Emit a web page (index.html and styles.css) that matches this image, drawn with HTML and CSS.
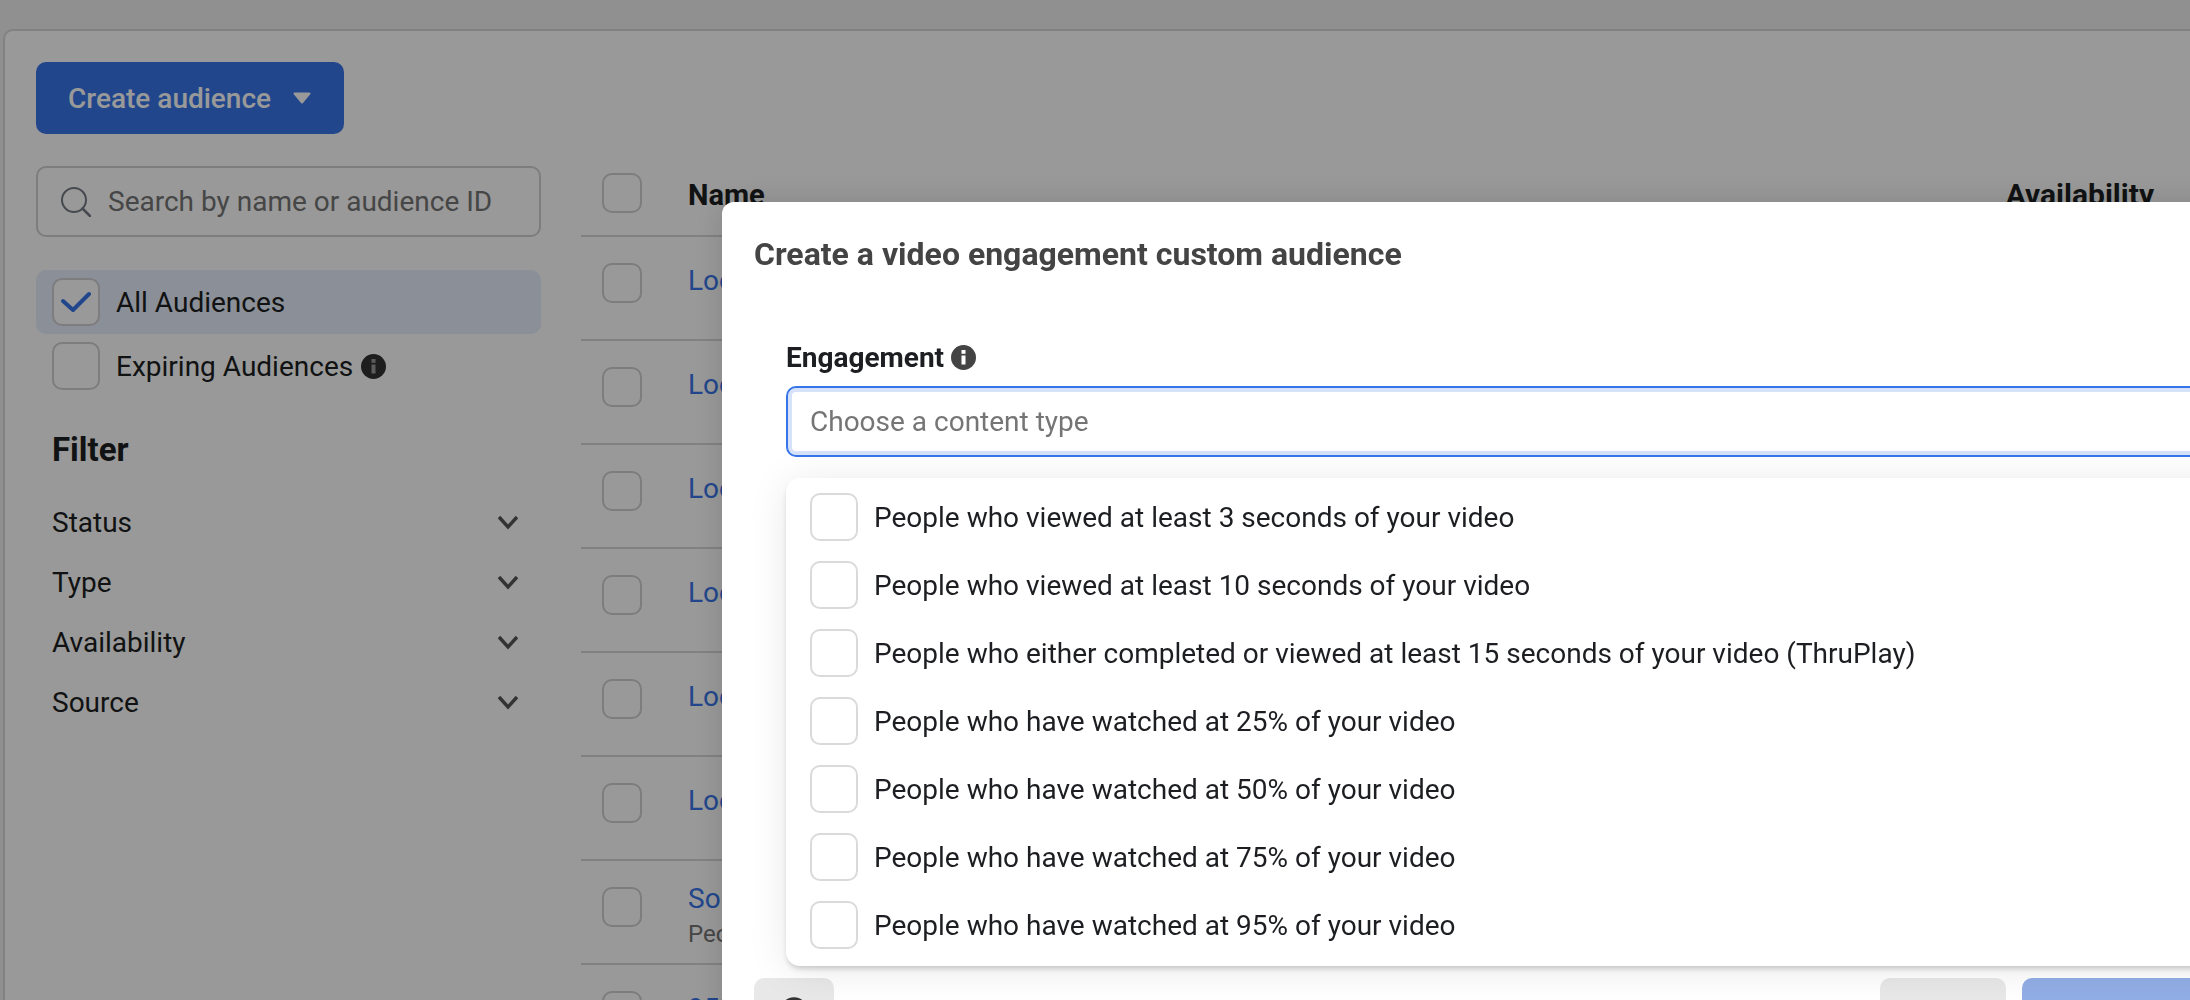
FILE: index.html
```html
<!DOCTYPE html>
<html lang="en">
<head>
<meta charset="utf-8">
<title>Audiences</title>
<link rel="stylesheet" href="styles.css">
</head>
<body>
<div class="page">
  <main class="card">
    <div class="toolbar">
      <button class="create-btn">Create audience
        <svg class="caret" width="18" height="12" viewBox="0 0 18 12"><path d="M1.5 1.5h15L9 10.5z" fill="currentColor" stroke="currentColor" stroke-linejoin="round" stroke-width="2"/></svg>
      </button>
    </div>
    <div class="content">
      <aside class="sidebar">
        <div class="search">
          <svg width="30" height="30" viewBox="0 0 30 30" fill="none" stroke="#757a85" stroke-width="2"><circle cx="13" cy="13" r="12"/><path d="M21.5 21.5L29 29" stroke-linecap="round" stroke-width="2.5"/></svg>
          <span>Search by name or audience ID</span>
        </div>
        <div class="scope scope-on">
          <span class="box box-side"><svg width="30" height="22" viewBox="0 0 30 22" fill="none"><path d="M2 10l10 9L28 3" stroke="#3775e9" stroke-width="4" stroke-linecap="round" stroke-linejoin="round"/></svg></span>
          <span>All Audiences</span>
        </div>
        <div class="scope">
          <span class="box box-side"></span>
          <span>Expiring Audiences</span>
          <svg class="info" width="25" height="25" viewBox="0 0 25 25"><circle cx="12.5" cy="12.5" r="12.5" fill="#333"/><rect x="10.5" y="10.5" width="4" height="9" fill="#999"/><rect x="10.5" y="5" width="4" height="3.8" fill="#999"/></svg>
        </div>
        <h2 class="filter-title">Filter</h2>
        <ul class="filters">
          <li>Status<svg width="22" height="16" viewBox="0 0 22 16" fill="none"><path d="M2 3l9 10 9-10" stroke="#555" stroke-width="3.4"/></svg></li>
          <li>Type<svg width="22" height="16" viewBox="0 0 22 16" fill="none"><path d="M2 3l9 10 9-10" stroke="#555" stroke-width="3.4"/></svg></li>
          <li>Availability<svg width="22" height="16" viewBox="0 0 22 16" fill="none"><path d="M2 3l9 10 9-10" stroke="#555" stroke-width="3.4"/></svg></li>
          <li>Source<svg width="22" height="16" viewBox="0 0 22 16" fill="none"><path d="M2 3l9 10 9-10" stroke="#555" stroke-width="3.4"/></svg></li>
        </ul>
      </aside>
      <section class="table">
        <div class="thead">
          <span class="box box-row"></span>
          <span class="th-name">Name</span>
          <span class="th-avail">Availability</span>
        </div>
        <div class="row"><span class="box box-row"></span><div class="cell"><a class="name">Lookalike (US, 1%)</a></div></div>
        <div class="row"><span class="box box-row"></span><div class="cell"><a class="name">Lookalike (US, 2%)</a></div></div>
        <div class="row"><span class="box box-row"></span><div class="cell"><a class="name">Lookalike (US, 3%)</a></div></div>
        <div class="row"><span class="box box-row"></span><div class="cell"><a class="name">Lookalike (US, 4%)</a></div></div>
        <div class="row"><span class="box box-row"></span><div class="cell"><a class="name">Lookalike (US, 5%)</a></div></div>
        <div class="row"><span class="box box-row"></span><div class="cell"><a class="name">Lookalike (US, 6%)</a></div></div>
        <div class="row"><span class="box box-row"></span><div class="cell cell-two"><a class="name">Source audience</a><span class="sub">People</span></div></div>
        <div class="row"><span class="box box-row"></span><div class="cell"><a class="name">95% video viewers</a></div></div>
      </section>
    </div>
  </main>
</div>
<div class="scrim"></div>
<div class="modal">
  <h1 class="modal-title">Create a video engagement custom audience</h1>
  <div class="modal-body">
    <div class="label">Engagement
      <svg width="25" height="25" viewBox="0 0 25 25"><circle cx="12.5" cy="12.5" r="12.5" fill="#444"/><rect x="10.5" y="10.5" width="4" height="9" fill="#fff"/><rect x="10.5" y="5" width="4" height="3.8" fill="#fff"/></svg>
    </div>
    <div class="select">Choose a content type</div>
    <ul class="menu">
      <li><span class="box box-menu"></span>People who viewed at least 3 seconds of your video</li>
      <li><span class="box box-menu"></span>People who viewed at least 10 seconds of your video</li>
      <li><span class="box box-menu"></span>People who either completed or viewed at least 15 seconds of your video (ThruPlay)</li>
      <li><span class="box box-menu"></span>People who have watched at 25% of your video</li>
      <li><span class="box box-menu"></span>People who have watched at 50% of your video</li>
      <li><span class="box box-menu"></span>People who have watched at 75% of your video</li>
      <li><span class="box box-menu"></span>People who have watched at 95% of your video</li>
    </ul>
  </div>
  <div class="modal-footer">
    <span class="btn btn-help"><svg width="28" height="28" viewBox="0 0 28 28" fill="none"><circle cx="14" cy="14" r="12" stroke="#333" stroke-width="3.5"/></svg></span>
    <span class="btn btn-cancel"></span>
    <span class="btn btn-next"></span>
  </div>
</div>
</body>
</html>
```
FILE: styles.css
```css
* { box-sizing: border-box; }
html, body { margin: 0; height: 1000px; overflow: hidden; }
body { font-family: Roboto, "Liberation Sans", sans-serif; color: #1c1e21; background: #f0f0f0; }
.page { padding: 29px 0 0 3px; height: 1000px; }
.card { background: #fff; border: 2px solid #d8d8d8; border-right: 0; border-bottom: 0; border-radius: 10px 0 0 0; height: 971px; padding: 31px 0 0 31px; overflow: hidden; }
.toolbar { height: 72px; }
.create-btn { display: flex; align-items: center; gap: 22px; width: 308px; height: 72px; padding: 0 0 0 32px; border: 0; border-radius: 10px; background: #3775e9; color: #fff; font: 500 28px Roboto, sans-serif; }
.content { display: flex; margin-top: 32px; }
.sidebar { width: 505px; flex: none; }
.search { display: flex; align-items: center; gap: 17px; height: 71px; padding: 0 0 0 23px; border: 2px solid #d0d0d0; border-radius: 10px; color: #757575; font-size: 28px; }
.scope { display: flex; align-items: center; height: 64px; padding-left: 16px; font-size: 28px; gap: 16px; }
.scope-on { margin-top: 33px; background: #e8eefd; border-radius: 10px; }
.box { display: inline-flex; align-items: center; justify-content: center; flex: none; background: #fff; border: 2px solid #d0d0d4; border-radius: 10px; }
.box-side { width: 48px; height: 48px; }
.info { margin-left: -8px; }
.filter-title { margin: 32px 0 0 16px; font-size: 33px; font-weight: 700; line-height: 40px; }
.filters { list-style: none; margin: 22px 0 0; padding: 0 22px 0 16px; font-size: 28px; }
.filters li { display: flex; justify-content: space-between; align-items: center; height: 60px; }
.table { flex: 1; margin-left: 40px; min-width: 0; }
.thead, .row { display: flex; align-items: flex-start; padding-left: 21px; border-bottom: 2px solid #d8d8d8; }
.thead { height: 71px; padding-top: 7px; }
.row { height: 104px; padding-top: 26px; }
.box-row { width: 40px; height: 40px; }
.th-name { margin-left: 46px; font-size: 29px; font-weight: 700; line-height: 44px; }
.th-avail { margin-left: auto; margin-right: 36px; font-size: 30px; font-weight: 700; line-height: 44px; }
.cell { margin-left: 46px; display: flex; flex-direction: column; white-space: nowrap; }
.cell-two { margin-top: -6px; }
.name { color: #3775e9; font-size: 28px; line-height: 36px; }
.sub { color: #757575; font-size: 24px; line-height: 34px; }
.scrim { position: fixed; inset: 0; background: rgba(0,0,0,.4); }
.modal { position: fixed; left: 722px; top: 202px; width: 1600px; height: 900px; background: #fff; border-radius: 12px; box-shadow: 0 0 32px rgba(0,0,0,.14); }
.modal-title { margin: 0; padding: 30px 0 0 32px; font-size: 32px; font-weight: 700; line-height: 44px; color: #444; }
.modal-body { position: relative; padding: 61px 0 0 64px; }
.label { display: flex; align-items: center; gap: 7px; height: 40px; font-size: 28px; font-weight: 700; color: #1c1e21; }
.select { display: flex; align-items: center; height: 71px; margin-top: 9px; padding-left: 22px; border: 2px solid #3775e9; box-shadow: inset 0 0 0 4px #d5e2fa; border-radius: 10px; color: #757575; font-size: 28px; }
.menu { position: relative; z-index: 1; list-style: none; margin: 21px 0 0; padding: 5px 0 0 24px; height: 488px; background: #fff; border-radius: 14px; font-size: 28px; box-shadow: 0 4px 6px -2px rgba(0,0,0,.22), 0 4px 40px rgba(0,0,0,.09); }
.menu li { display: flex; align-items: center; gap: 16px; height: 68px; }
.box-menu { width: 48px; height: 48px; border-color: #dadada; }
.modal-footer { display: flex; gap: 16px; padding: 12px 0 0 32px; width: 1600px; }
.btn { height: 60px; border-radius: 10px; display: block; }
.btn-help { display: flex; justify-content: center; padding-top: 19px; width: 80px; background: #e8e8e8; margin-right: auto; }
.btn-cancel { width: 126px; background: #e8e8e8; }
.btn-next { width: 300px; flex: none; background: #92aee6; }
```
